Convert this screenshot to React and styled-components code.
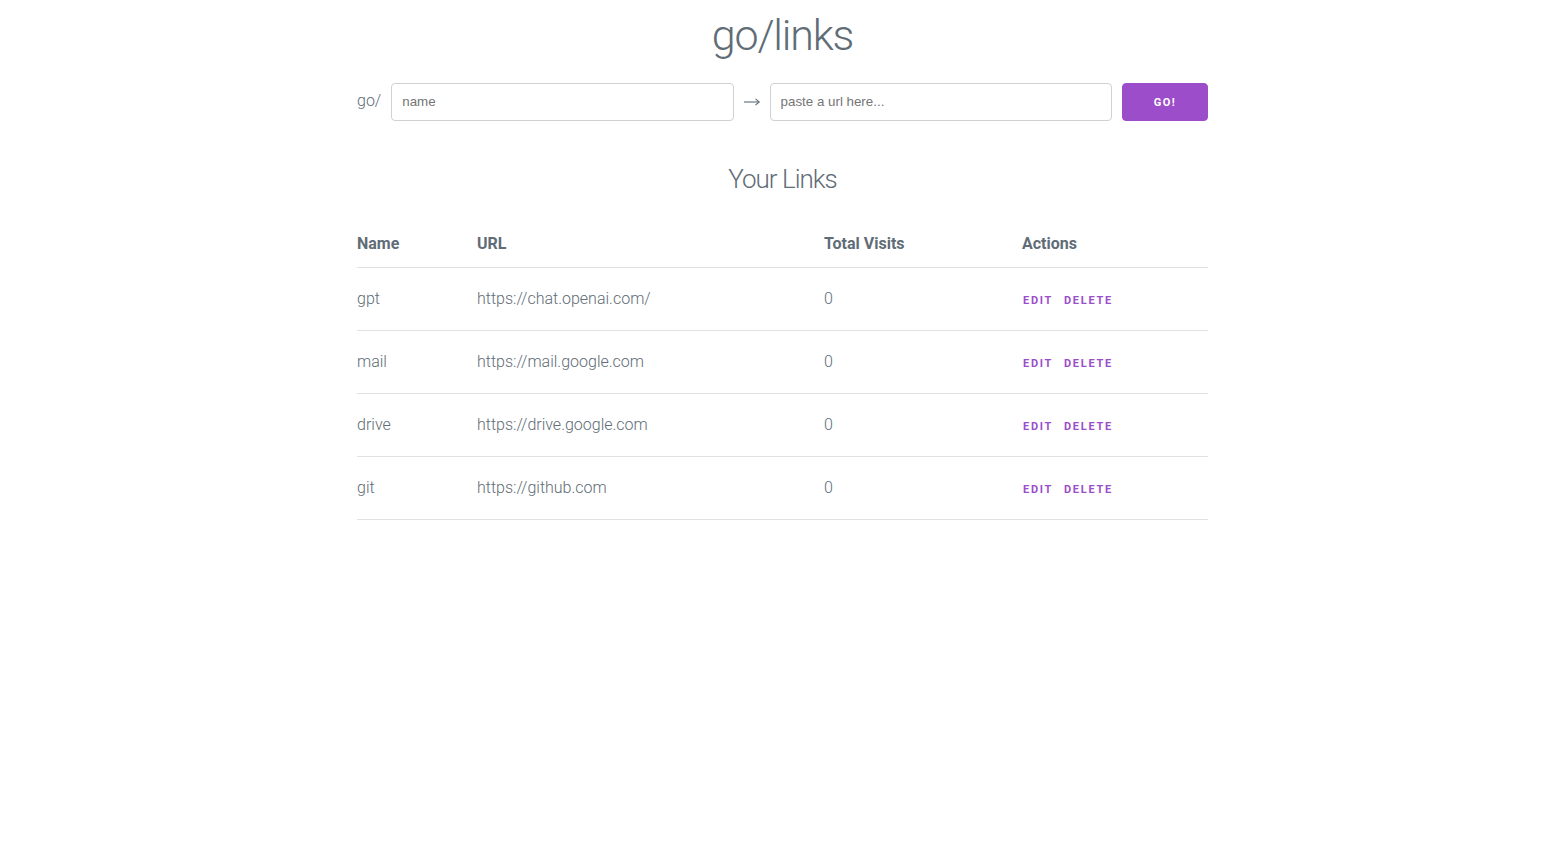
import React from 'react';
import styled, { createGlobalStyle } from 'styled-components';

const GlobalStyle = createGlobalStyle`
  html, body {
    margin: 0;
    padding: 0;
    background: #ffffff;
  }

  body {
    font-family: Roboto, 'Helvetica Neue', 'Liberation Sans', Arial, sans-serif;
    font-weight: 300;
    font-size: 16px;
    line-height: 1.6;
    letter-spacing: 0.01em;
    color: #606c76;
  }
`;

const Container = styled.div`
  width: 851px;
  margin: 0 auto;
`;

const Title = styled.h1`
  margin: 10px 0 0;
  font-size: 43px;
  font-weight: 300;
  line-height: 1.2;
  letter-spacing: -1.2px;
  text-align: center;
`;

const Form = styled.form`
  display: flex;
  align-items: center;
  gap: 10px;
  margin-top: 21px;
`;

const Prefix = styled.span`
  font-size: 16px;
  letter-spacing: 0;
  color: #606c76;
  margin-top: -2px;
`;

const ArrowIcon = styled.svg`
  display: block;
  width: 16px;
  height: 10px;
  flex: none;
`;

const Input = styled.input`
  flex: 1;
  min-width: 0;
  height: 38px;
  box-sizing: border-box;
  padding: 6px 10px;
  border: 1px solid #d1d1d1;
  border-radius: 4px;
  background: transparent;
  font-family: 'Liberation Sans', Arial, sans-serif;
  font-size: 13.33px;
  color: #606c76;
  outline: none;

  &::placeholder {
    color: #757575;
  }
`;

const GoButton = styled.button`
  width: 86px;
  height: 38px;
  border: 1px solid #9b4dca;
  border-radius: 4px;
  background: #9b4dca;
  color: #ffffff;
  font-family: Roboto, 'Helvetica Neue', Arial, sans-serif;
  font-size: 11px;
  font-weight: 700;
  letter-spacing: 1.4px;
  text-transform: uppercase;
  cursor: pointer;
  padding: 2px 0 0;
`;

const Subtitle = styled.h3`
  margin: 40px 0 21px;
  font-size: 26px;
  font-weight: 300;
  line-height: 1.4;
  letter-spacing: -1px;
  text-align: center;
`;

const Table = styled.table`
  width: 100%;
  border-collapse: collapse;
  table-layout: fixed;
`;

const HeadCell = styled.th`
  padding: 13px 15px 10px;
  text-align: left;
  font-weight: 700;
  letter-spacing: 0;
  border-bottom: 1px solid #e1e1e1;

  &:first-child { padding-left: 0; }
  &:last-child { padding-right: 0; }
`;

const Cell = styled.td`
  height: 38px;
  padding: 12px 15px;
  text-align: left;
  vertical-align: middle;
  letter-spacing: 0;
  border-bottom: 1px solid #e1e1e1;
  white-space: nowrap;

  &:first-child { padding-left: 0; }
  &:last-child { padding-right: 0; }
`;

const Actions = styled.div`
  display: flex;
  align-items: center;
  gap: 11px;
  height: 38px;
  padding-left: 1px;
`;

const ClearButton = styled.button`
  height: 38px;
  padding: 3px 0 0;
  border: none;
  background: transparent;
  color: #9b4dca;
  font-family: Roboto, 'Helvetica Neue', Arial, sans-serif;
  font-size: 11px;
  font-weight: 700;
  letter-spacing: 1.7px;
  text-transform: uppercase;
  cursor: pointer;
`;

const links = [
  { name: 'gpt', url: 'https://chat.openai.com/', visits: 0 },
  { name: 'mail', url: 'https://mail.google.com', visits: 0 },
  { name: 'drive', url: 'https://drive.google.com', visits: 0 },
  { name: 'git', url: 'https://github.com', visits: 0 },
];

const Arrow = () => (
  <ArrowIcon viewBox="0 0 16 10" fill="none" stroke="#606c76" strokeWidth="1.1">
    <path d="M0 5h15.2" />
    <path d="M11.5 1.8L15.2 5l-3.7 3.2" />
  </ArrowIcon>
);

const App = () => {
  return (
    <Container>
      <GlobalStyle />
      <Title>go/links</Title>
      <Form onSubmit={(e) => e.preventDefault()}>
        <Prefix>go/</Prefix>
        <Input type="text" placeholder="name" />
        <Arrow />
        <Input type="text" placeholder="paste a url here..." />
        <GoButton type="submit">Go!</GoButton>
      </Form>

      <Subtitle>Your Links</Subtitle>

      <Table>
        <colgroup>
          <col style={{ width: 105 }} />
          <col style={{ width: 347 }} />
          <col style={{ width: 198 }} />
          <col style={{ width: 201 }} />
        </colgroup>
        <thead>
          <tr>
            <HeadCell>Name</HeadCell>
            <HeadCell>URL</HeadCell>
            <HeadCell>Total Visits</HeadCell>
            <HeadCell>Actions</HeadCell>
          </tr>
        </thead>
        <tbody>
          {links.map((link) => (
            <tr key={link.name}>
              <Cell>{link.name}</Cell>
              <Cell>{link.url}</Cell>
              <Cell>{link.visits}</Cell>
              <Cell>
                <Actions>
                  <ClearButton>Edit</ClearButton>
                  <ClearButton>Delete</ClearButton>
                </Actions>
              </Cell>
            </tr>
          ))}
        </tbody>
      </Table>
    </Container>
  );
};

export default App;
